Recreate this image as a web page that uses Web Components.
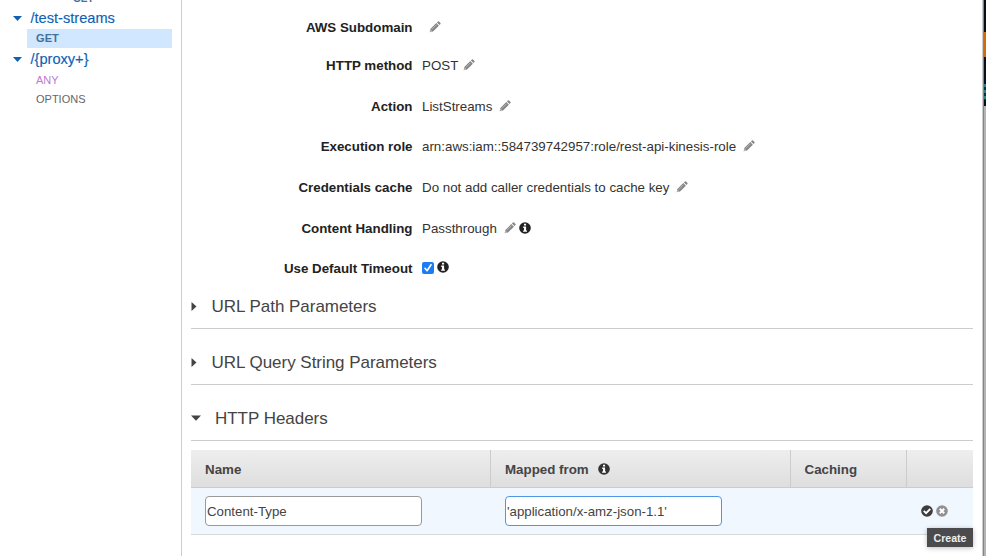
<!DOCTYPE html>
<html lang="en">
<head>
<meta charset="utf-8">
<title>Integration Request</title>
<style>
body{margin:0;background:#fff;overflow:hidden;font-family:"Liberation Sans",Arial,sans-serif;color:#222}
</style>
</head>
<body>
<api-console></api-console>
<script>
function define(name, html, init) {
  const t = document.createElement('template');
  t.innerHTML = html;
  customElements.define(name, class extends HTMLElement {
    constructor() {
      super();
      this.attachShadow({mode: 'open'}).append(t.content.cloneNode(true));
    }
    connectedCallback() { if (init) init(this, this.shadowRoot); }
  });
}

define('pencil-icon', `<style>:host{display:block;width:12px;height:12px;flex:none}svg{display:block}</style>
<svg width="12" height="12" viewBox="0 0 13 13"><path d="M.7 12.3 1.5 8.7 7.9 2.3 10.7 5.1 4.3 11.5ZM8.6 1.6 9.7.6Q10.3.1 10.9.6L12.4 2.1Q12.9 2.7 12.4 3.3L11.4 4.4Z" fill="#858585"/><path d="M3 9.2 8.2 4" stroke="#c9c9c9" stroke-width=".8"/><path d="m1.8 9.7 1.5 1.5-1.5.4-.4-.4z" fill="#eee"/></svg>`);

define('info-icon', `<style>:host{display:block;width:12px;height:12px;flex:none}svg{display:block}</style>
<svg width="12" height="12" viewBox="0 0 12 12"><circle cx="6" cy="6" r="5.8" fill="currentColor"/><path d="M5 1.8H7.1V3.6H5ZM4.2 4.6H7.1V8.4H8V9.8H4.1V8.4H5V6H4.2Z" fill="#fff"/></svg>`);

define('state-icon', `<style>:host{display:block;width:12px;height:12px;flex:none}svg{display:block}.x{display:none}:host([kind=cancel]) .x{display:block}:host([kind=cancel]) .ok{display:none}</style>
<svg class="ok" width="12" height="12" viewBox="0 0 12 12"><circle cx="6" cy="6" r="5.8" fill="#3c3c3c"/><path d="m2.8 5.9 2.3 2.3 4.2-4.3" fill="none" stroke="#fff" stroke-width="1.9"/></svg>
<svg class="x" width="12" height="12" viewBox="0 0 12 12"><circle cx="6" cy="6" r="5.8" fill="#919191"/><path d="m3.8 3.8 4.4 4.4m0-4.4L3.8 8.2" stroke="#fff" stroke-width="2"/></svg>`);

define('tree-path', `<style>:host{display:flex;align-items:center;height:22px;padding-left:13px;color:#0d62b5;font-size:14.6px;line-height:20px;-webkit-text-stroke:.15px}svg{width:9px;height:5px;margin-right:8.5px}</style>
<svg viewBox="0 0 9 5"><path d="M0 0H9L4.5 5Z" fill="currentColor"/></svg><slot></slot>`);

define('tree-method', `<style>:host{display:flex;align-items:center;box-sizing:border-box;height:19px;margin:0 9px 0 27px;padding-left:9px;font-size:11px;color:#666}
:host([kind=any]){color:#bd7bd0}:host([selected]){background:#d0e7ff;color:#3f719f;font-weight:bold;font-size:11.1px;padding-bottom:1px}</style><slot></slot>`);

define('resource-tree', `<style>:host{display:block;box-sizing:border-box;width:182px;height:556px;border-right:1px solid #ccc;flex:none;overflow:hidden}.cut{height:7px;display:flex;align-items:flex-end;padding-left:73px;font-size:10px;line-height:11px;font-weight:bold;color:#3f719f}.cut span{margin-bottom:3px}</style>
<div class="cut"><span>GET</span></div>
<tree-path>/test-streams</tree-path><tree-method selected>GET</tree-method>
<tree-path>/{proxy+}</tree-path><tree-method kind="any">ANY</tree-method><tree-method>OPTIONS</tree-method>`);

define('setting-row', `<style>:host{display:flex;align-items:center;height:40.6px;font-size:13.33px;line-height:18px}.l{width:230.5px;text-align:right;font-weight:bold;margin-right:9.5px;padding-top:2px;flex:none}.v{display:flex;align-items:center;color:#333}.t{padding-top:2px}::slotted(pencil-icon){margin-left:7px}::slotted(info-icon){margin-left:3px;color:#222}</style>
<span class="l"></span><span class="v"><span class="t"></span><slot></slot></span>`, (el, root) => {
  root.querySelector('.l').textContent = el.getAttribute('label');
  root.querySelector('.t').textContent = el.getAttribute('value') || '';
});

define('check-box', `<style>:host{display:block;width:12px;height:12px;border-radius:2px;background:#1b7cf3}svg{display:block}</style><svg width="12" height="12" viewBox="0 0 12 12"><path d="m3 6.3 2.1 2.4 3.9-6" fill="none" stroke="#fff" stroke-width="1.6" stroke-linecap="round" stroke-linejoin="round"/></svg>`);

define('fold-section', `<style>:host{display:flex;align-items:center;box-sizing:border-box;height:56px;padding-top:11px;margin:0 9px 0 9px;border-bottom:1px solid #ccc;font-size:17px;line-height:20px;color:#444}span{padding-top:2px;letter-spacing:-.03px}svg{flex:none;width:6px;height:9px;margin-right:14.5px}.d{display:none}:host([open]) .d{display:block;width:10px;height:6px;margin-right:14px}:host([open]) .r{display:none}</style>
<svg class="r" viewBox="0 0 6 9"><path d="M.5 0V9L5.5 4.5Z" fill="#444"/></svg><svg class="d" viewBox="0 0 10 6"><path d="M0 .5H10L5 5.7Z" fill="#444"/></svg><span><slot></slot></span>`);

define('text-field', `<style>:host{display:flex;align-items:center;box-sizing:border-box;width:217px;height:30px;border:1px solid #999;border-radius:4px;background:#fff;padding-left:1px;font-size:13.27px;color:#444}:host([focused]){border-color:#4f97e4}</style><slot></slot>`);

define('tool-tip', `<style>:host{display:flex;align-items:center;justify-content:center;box-sizing:border-box;width:46px;height:19px;background:#4b4b4d;color:#eee;font-size:10.6px;font-weight:bold;box-shadow:0 1px 5px #0004}</style><slot></slot>`);

define('header-table', `<style>
:host{display:block;margin:9px 9px 0 9px;position:relative}
.row{display:grid;grid-template-columns:299px 300px 116px 1fr;box-sizing:border-box}
.head{height:38px;background:linear-gradient(#eee,#dedede);border-bottom:1px solid #ccc;font-size:13.33px;font-weight:bold;color:#444}
.body{height:47px;background:#f0f7fe;border-bottom:1px solid #d5dadd}
.row>div{display:flex;align-items:center;padding-left:14px}
.head span{padding-top:2px}
.head>div+div{border-left:1px solid #ccc}.body>div+div{padding-left:15px}
.head>div+div+div{padding-left:13.5px}
info-icon{margin-left:9px;color:#333}
.body>.actions{padding-left:15px;gap:3px}
tool-tip{position:absolute;right:0;top:78px}
</style>
<div class="row head"><div><span>Name</span></div><div><span>Mapped from</span><info-icon></info-icon></div><div><span>Caching</span></div><div></div></div>
<div class="row body"><div><text-field>Content-Type</text-field></div><div><text-field focused>'application/x-amz-json-1.1'</text-field></div><div></div><div class="actions"><state-icon></state-icon><state-icon kind="cancel"></state-icon></div></div>
<tool-tip>Create</tool-tip>`);

define('integration-panel', `<style>:host{display:block;width:800px;height:556px;flex:none}.settings{padding-top:9.5px;height:273px;box-sizing:border-box}
.first{height:35.5px}.first pencil-icon{margin-bottom:1px}.time info-icon{margin-bottom:2px}.time check-box{margin-bottom:0}.post{margin-left:5px}</style>
<div class="settings">
<setting-row class="first" label="AWS Subdomain"><pencil-icon></pencil-icon></setting-row>
<setting-row label="HTTP method" value="POST"><pencil-icon class="post"></pencil-icon></setting-row>
<setting-row label="Action" value="ListStreams"><pencil-icon></pencil-icon></setting-row>
<setting-row label="Execution role" value="arn:aws:iam::584739742957:role/rest-api-kinesis-role"><pencil-icon></pencil-icon></setting-row>
<setting-row label="Credentials cache" value="Do not add caller credentials to cache key"><pencil-icon></pencil-icon></setting-row>
<setting-row label="Content Handling" value="Passthrough"><pencil-icon></pencil-icon><info-icon></info-icon></setting-row>
<setting-row class="time" label="Use Default Timeout"><check-box></check-box><info-icon></info-icon></setting-row>
</div>
<fold-section>URL Path Parameters</fold-section>
<fold-section>URL Query String Parameters</fold-section>
<fold-section open>HTTP Headers</fold-section>
<header-table></header-table>`);

define('window-edge', `<style>:host{display:flex;width:4px;height:556px}.a{width:2px;background:linear-gradient(90deg,#ccc 50%,#858585 50%)}.b{width:2px}.b i{display:block}</style>
<div class="a"></div><div class="b"><i style="height:32px;background:#080e14"></i><i style="height:25px;background:#d16a0a"></i><i style="height:27px;background:#06101a"></i><i style="height:16px;background:repeating-linear-gradient(#2a7f8c 0 3px,#0b3038 3px 6px)"></i><i style="height:6px;background:#06101a"></i><i style="height:450px;background:#b4b4b4"></i></div>`);

define('api-console', `<style>:host{display:flex;width:986px;height:556px;overflow:hidden}</style><resource-tree></resource-tree><integration-panel></integration-panel><window-edge></window-edge>`);
</script>
</body>
</html>
